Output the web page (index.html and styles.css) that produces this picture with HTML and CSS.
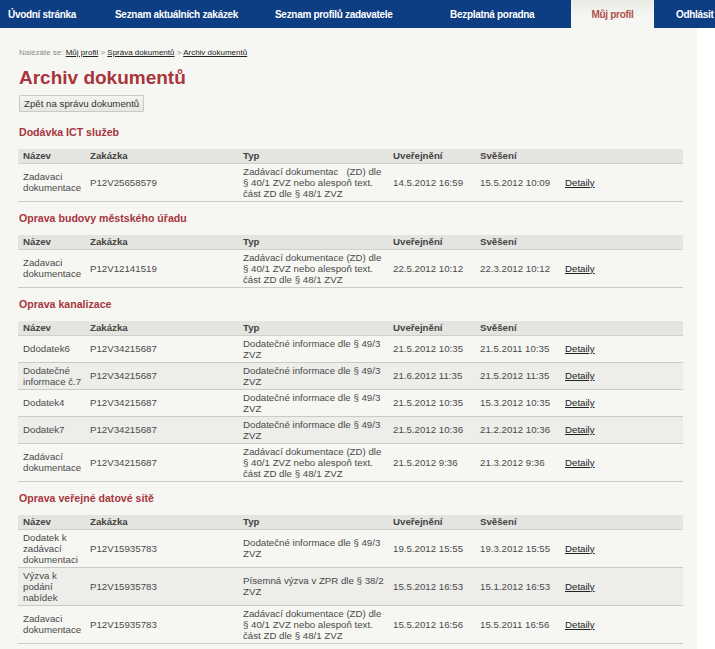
FILE: index.html
```html
<!DOCTYPE html>
<html lang="cs">
<head>
<meta charset="utf-8">
<title>Archiv dokumentů</title>
<link rel="stylesheet" href="styles.css">
</head>
<body>
<nav class="topnav">
  <ul class="menu">
    <li class="menu-item item-home"><a href="#">Úvodní stránka</a></li>
    <li class="menu-item item-tenders"><a href="#">Seznam aktuálních zakázek</a></li>
    <li class="menu-item item-profiles"><a href="#">Seznam profilů zadavatele</a></li>
    <li class="menu-item item-advice"><a href="#">Bezplatná poradna</a></li>
    <li class="menu-item item-my is-active"><a href="#">Můj profil</a></li>
    <li class="menu-item item-logout"><a href="#">Odhlásit</a></li>
  </ul>
</nav>
<main class="page">
  <p class="crumbs"><span class="crumbs-label">Nalézáte se:</span> <a href="#">Můj profil</a> <span class="sep">&gt;</span> <a href="#">Správa dokumentů</a> <span class="sep">&gt;</span> <a href="#">Archiv dokumentů</a></p>
  <h1 class="title">Archiv dokumentů</h1>
  <button class="back-btn" type="button">Zpět na správu dokumentů</button>

  <section class="tender">
    <h2 class="tender-name">Dodávka ICT služeb</h2>
    <table class="docs">
      <colgroup><col class="c-name"><col class="c-code"><col class="c-type"><col class="c-pub"><col class="c-off"><col class="c-link"></colgroup>
      <thead><tr><th>Název</th><th>Zakázka</th><th>Typ</th><th>Uveřejnění</th><th>Svěšení</th><th></th></tr></thead>
      <tbody>
        <tr><td>Zadavaci dokumentace</td><td>P12V25658579</td><td>Zadávací dokumentac&nbsp;&nbsp; (ZD) dle § 40/1 ZVZ nebo alespoň text. část ZD dle § 48/1 ZVZ</td><td>14.5.2012 16:59</td><td>15.5.2012 10:09</td><td><a href="#">Detaily</a></td></tr>
      </tbody>
    </table>
  </section>

  <section class="tender">
    <h2 class="tender-name">Oprava budovy městského úřadu</h2>
    <table class="docs">
      <colgroup><col class="c-name"><col class="c-code"><col class="c-type"><col class="c-pub"><col class="c-off"><col class="c-link"></colgroup>
      <thead><tr><th>Název</th><th>Zakázka</th><th>Typ</th><th>Uveřejnění</th><th>Svěšení</th><th></th></tr></thead>
      <tbody>
        <tr><td>Zadavaci dokumentace</td><td>P12V12141519</td><td>Zadávací dokumentace (ZD) dle § 40/1 ZVZ nebo alespoň text. část ZD dle § 48/1 ZVZ</td><td>22.5.2012 10:12</td><td>22.3.2012 10:12</td><td><a href="#">Detaily</a></td></tr>
      </tbody>
    </table>
  </section>

  <section class="tender">
    <h2 class="tender-name">Oprava kanalizace</h2>
    <table class="docs">
      <colgroup><col class="c-name"><col class="c-code"><col class="c-type"><col class="c-pub"><col class="c-off"><col class="c-link"></colgroup>
      <thead><tr><th>Název</th><th>Zakázka</th><th>Typ</th><th>Uveřejnění</th><th>Svěšení</th><th></th></tr></thead>
      <tbody>
        <tr><td>Ddodatek6</td><td>P12V34215687</td><td>Dodatečné informace dle § 49/3 ZVZ</td><td>21.5.2012 10:35</td><td>21.5.2011 10:35</td><td><a href="#">Detaily</a></td></tr>
        <tr><td>Dodatečné informace č.7</td><td>P12V34215687</td><td>Dodatečné informace dle § 49/3 ZVZ</td><td>21.6.2012 11:35</td><td>21.5.2012 11:35</td><td><a href="#">Detaily</a></td></tr>
        <tr><td>Dodatek4</td><td>P12V34215687</td><td>Dodatečné informace dle § 49/3 ZVZ</td><td>21.5.2012 10:35</td><td>15.3.2012 10:35</td><td><a href="#">Detaily</a></td></tr>
        <tr><td>Dodatek7</td><td>P12V34215687</td><td>Dodatečné informace dle § 49/3 ZVZ</td><td>21.5.2012 10:36</td><td>21.2.2012 10:36</td><td><a href="#">Detaily</a></td></tr>
        <tr><td>Zadávací dokumentace</td><td>P12V34215687</td><td>Zadávací dokumentace (ZD) dle § 40/1 ZVZ nebo alespoň text. část ZD dle § 48/1 ZVZ</td><td>21.5.2012 9:36</td><td>21.3.2012 9:36</td><td><a href="#">Detaily</a></td></tr>
      </tbody>
    </table>
  </section>

  <section class="tender">
    <h2 class="tender-name">Oprava veřejné datové sítě</h2>
    <table class="docs">
      <colgroup><col class="c-name"><col class="c-code"><col class="c-type"><col class="c-pub"><col class="c-off"><col class="c-link"></colgroup>
      <thead><tr><th>Název</th><th>Zakázka</th><th>Typ</th><th>Uveřejnění</th><th>Svěšení</th><th></th></tr></thead>
      <tbody>
        <tr><td>Dodatek k zadávací dokumentaci</td><td>P12V15935783</td><td>Dodatečné informace dle § 49/3 ZVZ</td><td>19.5.2012 15:55</td><td>19.3.2012 15:55</td><td><a href="#">Detaily</a></td></tr>
        <tr><td>Výzva k podání nabídek</td><td>P12V15935783</td><td>Písemná výzva v ZPR dle § 38/2 ZVZ</td><td>15.5.2012 16:53</td><td>15.1.2012 16:53</td><td><a href="#">Detaily</a></td></tr>
        <tr><td>Zadavaci dokumentace</td><td>P12V15935783</td><td>Zadávací dokumentace (ZD) dle § 40/1 ZVZ nebo alespoň text. část ZD dle § 48/1 ZVZ</td><td>15.5.2012 16:56</td><td>15.5.2011 16:56</td><td><a href="#">Detaily</a></td></tr>
      </tbody>
    </table>
  </section>
</main>
</body>
</html>
```

FILE: styles.css
```css
html, body {
  margin: 0;
  padding: 0;
  background: #ffffff;
  font-family: "Liberation Sans", Arial, sans-serif;
  color: #4a4a4a;
}

.topnav {
  height: 28px;
  background: #0d3d82;
  overflow: hidden;
}

.menu {
  display: flex;
  margin: 0;
  padding: 0 0 0 8px;
  list-style: none;
  height: 28px;
  white-space: nowrap;
}

.menu-item {
  display: flex;
  align-items: center;
  height: 28px;
  flex: none;
}

.menu-item a {
  color: #ffffff;
  text-decoration: none;
  font-weight: bold;
  font-size: 10px;
  letter-spacing: -0.3px;
}

.item-home { width: 107px; }
.item-tenders { width: 160px; }
.item-profiles { width: 175px; }
.item-advice { width: 121px; }
.item-my {
  width: 83px;
  justify-content: center;
  background: linear-gradient(#ebebe6, #f6f6f2 60%);
}
.item-my a { color: #b0504c; font-weight: bold; }
.item-logout { padding-left: 22px; }

.page {
  width: 665px;
  background: #f6f7f3;
  padding: 19px 14px 12px 18px;
}

.crumbs {
  margin: 0 0 0 1px;
  font-size: 8px;
  line-height: 11px;
  color: #8a8a8a;
}

.crumbs a {
  color: #222222;
  text-decoration: underline;
}

.crumbs .sep { color: #8a8a8a; }

.title {
  margin: 9px 0 0 1px;
  font-size: 19px;
  line-height: 22px;
  font-weight: bold;
  color: #a8353c;
}

.back-btn {
  display: block;
  margin: 6px 0 0 1px;
  height: 17px;
  padding: 0 4px;
  font-family: "Liberation Sans", Arial, sans-serif;
  font-size: 9.7px;
  color: #333333;
  background: linear-gradient(#f3f3f0, #e6e6e2);
  border: 1px solid #c9c9c5;
  border-radius: 1px;
}

.tender-name {
  margin: 14px 0 9.5px 1px;
  font-size: 10.6px;
  line-height: 13px;
  font-weight: bold;
  color: #a8353c;
}

.tender + .tender .tender-name { margin-top: 10.5px; }

.docs {
  width: 665px;
  table-layout: fixed;
  border-collapse: collapse;
  font-size: 9.7px;
  line-height: 11px;
}

.c-name { width: 67px; }
.c-code { width: 153px; }
.c-type { width: 150px; }
.c-pub { width: 87px; }
.c-off { width: 85px; }
.c-link { width: 123px; }

.docs th {
  text-align: left;
  font-weight: bold;
  color: #454545;
  background: #e4e4e0;
  padding: 1px 3px 2px 5px;
  border-bottom: 1px solid #cfcfcb;
}

.docs td {
  padding: 2px 3px 2px 5px;
  vertical-align: middle;
  border-bottom: 1px solid #cacac6;
  color: #4a4a4a;
}

.docs tbody tr:nth-child(even) td { background: #ededea; }

.docs td a {
  color: #222222;
  text-decoration: underline;
}
```
